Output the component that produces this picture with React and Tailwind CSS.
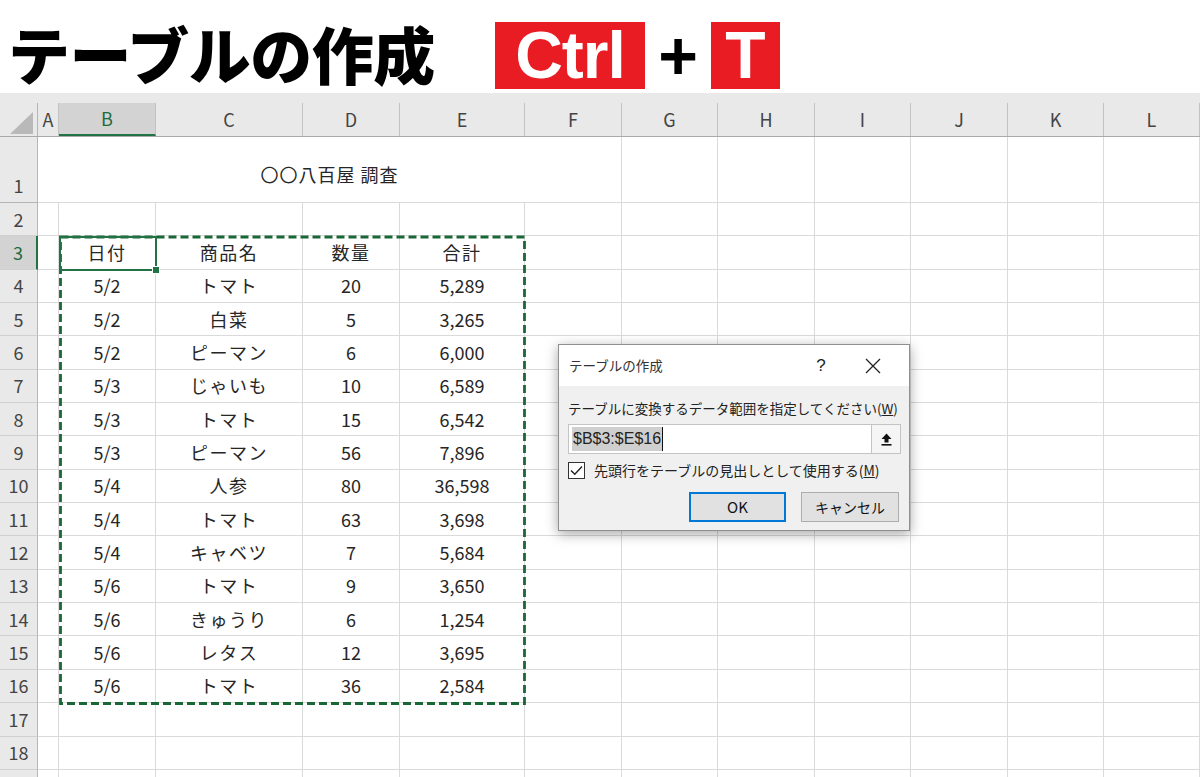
import React from 'react';

const cols = [
    { key: 'A', w: 'w-[21px]' },
    { key: 'B', w: 'w-[97px]' },
    { key: 'C', w: 'w-[147px]' },
    { key: 'D', w: 'w-[97px]' },
    { key: 'E', w: 'w-[125px]' },
    { key: 'F', w: 'w-[97px]' },
    { key: 'G', w: 'w-[96px]' },
    { key: 'H', w: 'w-[97px]' },
    { key: 'I', w: 'w-[96px]' },
    { key: 'J', w: 'w-[97px]' },
    { key: 'K', w: 'w-[96px]' },
    { key: 'L', w: 'w-[96px]' },
];

const data = [
    ['日付', '商品名', '数量', '合計'],
    ['5/2', 'トマト', '20', '5,289'],
    ['5/2', '白菜', '5', '3,265'],
    ['5/2', 'ピーマン', '6', '6,000'],
    ['5/3', 'じゃいも', '10', '6,589'],
    ['5/3', 'トマト', '15', '6,542'],
    ['5/3', 'ピーマン', '56', '7,896'],
    ['5/4', '人参', '80', '36,598'],
    ['5/4', 'トマト', '63', '3,698'],
    ['5/4', 'キャベツ', '7', '5,684'],
    ['5/6', 'トマト', '9', '3,650'],
    ['5/6', 'きゅうり', '6', '1,254'],
    ['5/6', 'レタス', '12', '3,695'],
    ['5/6', 'トマト', '36', '2,584'],
];

const font = { fontFamily: '"Noto Sans CJK JP", "Noto Sans", sans-serif' };

// one worksheet row (2..19)
const SheetRow = ({ num, values, label = true }) => {
    const active = num === 3;
    return (
        <div className="flex h-[33.35px]">
            <div
                className={`w-[38px] shrink-0 flex items-center justify-center text-[18px] border-b border-[#d0d0d0] ${
                    active
                        ? 'bg-[#d3d3d3] text-[#1e6b3b] border-r-2 border-r-[#217346]'
                        : 'bg-[#e9e9e9] text-[#444] border-r border-r-[#b5b5b5]'
                }`}
            >
                {label ? num : ''}
            </div>
            {cols.map((c, i) => {
                const v = values && i >= 1 && i <= 4 ? values[i - 1] : '';
                const isText = /[^\d/,]/.test(v);
                return (
                    <div
                        key={c.key}
                        className={`${c.w} shrink-0 border-r border-b border-[#dadada] flex items-center justify-center text-[18px] text-[#262626] ${
                            isText ? 'tracking-[1.5px]' : ''
                        }`}
                    >
                        {v}
                    </div>
                );
            })}
        </div>
    );
};

const Dialog = () => (
    <div
        className="absolute left-[558px] top-[344px] w-[352px] h-[187px] bg-[#f0f0f0] border border-[#8f8f8f] shadow-[0_3px_12px_rgba(0,0,0,0.35)] flex flex-col"
        style={font}
    >
        <div className="h-[41px] bg-white flex items-center pl-[10px] text-[13.5px] text-[#333]">
            <span className="w-[232px]">テーブルの作成</span>
            <span className="w-[40px] text-center text-[17px] text-[#222]" style={{ fontFamily: '"Liberation Sans", sans-serif' }}>?</span>
            <span className="w-[40px] flex justify-center ml-[12px]">
                <svg width="16" height="16" viewBox="0 0 16 16">
                    <path d="M1 1 L15 15 M15 1 L1 15" stroke="#222" strokeWidth="1.3" fill="none" />
                </svg>
            </span>
        </div>
        <div className="flex flex-col pl-[9px] pr-[9px]">
            <div className="mt-[12px] h-[20px] flex items-center text-[13.5px] text-[#222] whitespace-nowrap">
                テーブルに変換するデータ範囲を指定してください(<span className="underline">W</span>)
            </div>
            <div className="mt-[6px] flex h-[30px] w-[333px] border border-[#c4c4c4] bg-white">
                <div className="flex-1 flex items-center pl-[3px]">
                    <span
                        className="bg-[#cfcfcf] text-[#222] text-[16px] h-[24px] leading-[24px] px-[1px] border-r-[1.5px] border-r-[#111]"
                        style={{ fontFamily: '"Liberation Sans", sans-serif' }}
                    >
                        $B$3:$E$16
                    </span>
                </div>
                <div className="w-[29px] border-l border-[#c4c4c4] bg-[#f5f5f5] flex items-center justify-center">
                    <svg width="13" height="14" viewBox="0 0 13 14">
                        <path d="M6.5 1.5 L1.5 7 H4.5 V10.5 H8.5 V7 H11.5 Z" fill="#111" />
                        <rect x="1.5" y="12" width="10" height="1.6" fill="#111" />
                    </svg>
                </div>
            </div>
            <div className="mt-[7px] flex items-center h-[18px]">
                <div className="w-[17px] h-[17px] border border-[#333] bg-white flex items-center justify-center">
                    <svg width="13" height="11" viewBox="0 0 13 11">
                        <path d="M1 5.5 L4.8 9.3 L12 1.5" stroke="#222" strokeWidth="1.4" fill="none" />
                    </svg>
                </div>
                <span className="ml-[9px] text-[14px] text-[#222] whitespace-nowrap">
                    先頭行をテーブルの見出しとして使用する(<span className="underline">M</span>)
                </span>
            </div>
            <div className="mt-[13px] flex justify-end gap-[15px] pr-[1px]">
                <div className="w-[97px] h-[30px] border-2 border-[#0078d7] bg-[#e1e1e1] flex items-center justify-center text-[15px] text-[#111]">
                    OK
                </div>
                <div className="w-[98px] h-[30px] border border-[#adadad] bg-[#e1e1e1] flex items-center justify-center text-[14px] text-[#111]">
                    キャンセル
                </div>
            </div>
        </div>
    </div>
);

export default function App() {
    const rows = [];
    for (let n = 2; n <= 19; n++) {
        rows.push(
            <SheetRow key={n} num={n} label={n <= 18} values={n >= 3 && n <= 16 ? data[n - 3] : null} />
        );
    }

    return (
        <div className="relative w-[1200px] h-[777px] overflow-hidden bg-white" style={font}>
            {/* title */}
            <div className="h-[93px] flex items-start">
                <div className="mt-[15px] ml-[8px] w-[470px] text-[62px] leading-[76px] font-black text-black tracking-[-0.5px]">
                    テーブルの作成
                </div>
                <div className="mt-[21px] ml-[17px] flex items-center" style={{ fontFamily: '"Liberation Sans", sans-serif' }}>
                    <div className="w-[150px] h-[67px] bg-[#e91c24] flex items-center justify-center text-white font-bold text-[66px] leading-none tracking-[-1px]">
                        Ctrl
                    </div>
                    <div className="w-[66px] flex justify-center text-black font-bold text-[68px] leading-none">+</div>
                    <div className="w-[69px] h-[67px] bg-[#e91c24] flex items-center justify-center text-white font-bold text-[66px] leading-none">
                        T
                    </div>
                </div>
            </div>

            {/* sheet */}
            <div className="relative">
                <div className="h-[10px] bg-[#e9e9e9]" />
                <div className="flex h-[34px] bg-[#e9e9e9] border-b border-[#a9a9a9] text-[18px] text-[#444]">
                    <div className="w-[38px] shrink-0 border-r border-[#b5b5b5] relative">
                        <svg className="absolute left-[10px] top-[9px]" width="23" height="22" viewBox="0 0 23 22">
                            <polygon points="23,0 23,22 0,22" fill="#b9b9b9" />
                        </svg>
                    </div>
                    {cols.map(c => (
                        <div
                            key={c.key}
                            className={`${c.w} shrink-0 border-r border-[#c2c2c2] flex items-center justify-center ${
                                c.key === 'B' ? 'bg-[#d3d3d3] text-[#1e6b3b] border-b-2 border-b-[#217346]' : ''
                            }`}
                        >
                            {c.key}
                        </div>
                    ))}
                </div>
                {/* row 1: A1:F1 merged */}
                <div className="flex h-[66px]">
                    <div className="w-[38px] shrink-0 bg-[#e9e9e9] border-r border-b border-[#b5b5b5] flex items-end justify-center pb-[3px] text-[18px] text-[#444]">
                        1
                    </div>
                    <div className="w-[584px] shrink-0 border-r border-b border-[#dadada] flex items-end justify-center pb-[14px] text-[18px] tracking-[1px] text-[#262626]">
                        〇〇八百屋 調査
                    </div>
                    {cols.slice(6).map(c => (
                        <div key={c.key} className={`${c.w} shrink-0 border-r border-b border-[#dadada]`} />
                    ))}
                </div>
                {rows}

                {/* copy marquee + active cell */}
                <svg className="absolute left-0 top-0 pointer-events-none" width="1200" height="684">
                    <rect x="60.5" y="144" width="464" height="466.5" fill="none" stroke="#1b6636" strokeWidth="2.8" strokeDasharray="8 4" />
                    <rect x="60" y="144" width="96" height="33" fill="none" stroke="#217346" strokeWidth="2" />
                    <rect x="152.5" y="173.5" width="7" height="7" fill="#217346" stroke="#fff" strokeWidth="1" />
                </svg>
            </div>

            <Dialog />
        </div>
    );
}
